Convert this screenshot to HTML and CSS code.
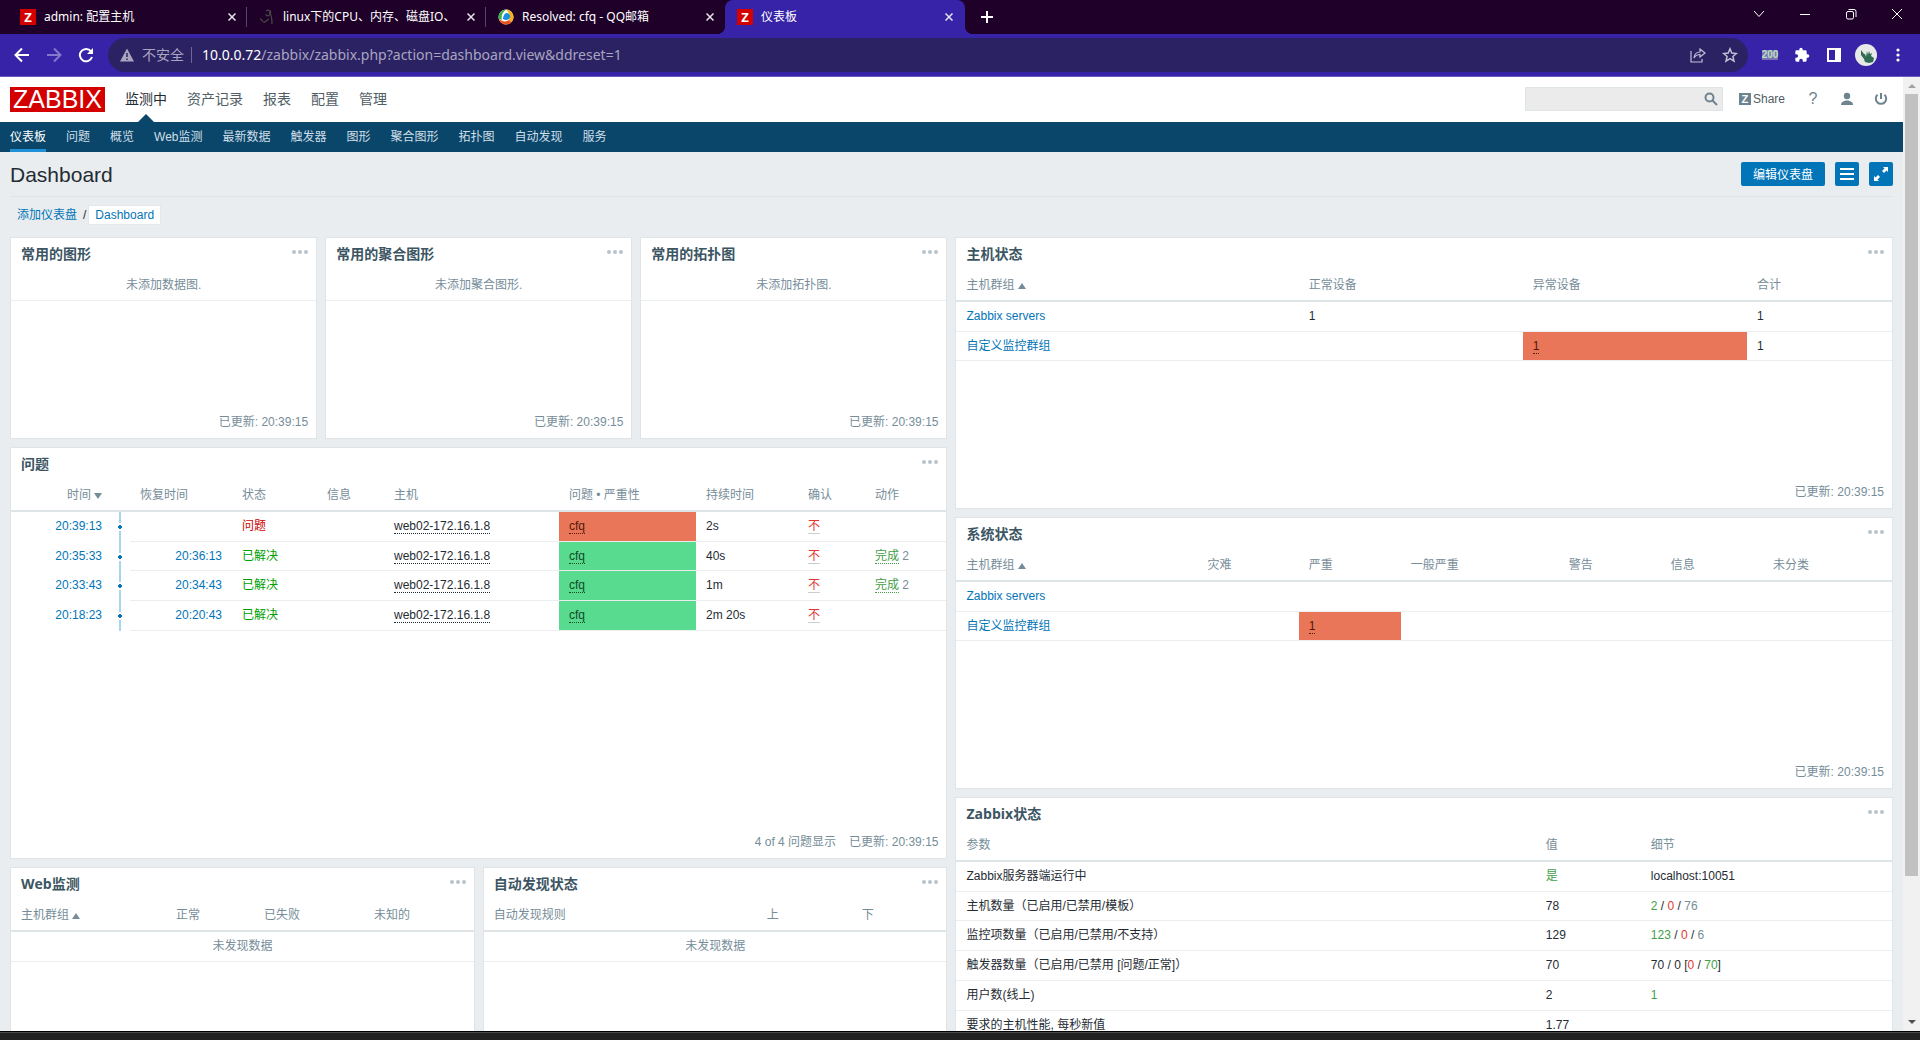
FILE: index.html
```html
<!DOCTYPE html>
<html lang="zh-CN">
<head>
<meta charset="utf-8">
<title>仪表板</title>
<link rel="stylesheet" href="styles.css">
</head>
<body>
<header class="browser">
  <div class="tabstrip">
    <div class="tab">
      <span class="favicon-z">Z</span><span class="tab-title">admin: 配置主机</span>
      <button class="tab-close" aria-label="关闭"><svg width="8" height="8" viewBox="0 0 8 8"><path d="M0.5 0.5l7 7M7.5 0.5l-7 7"/></svg></button>
    </div>
    <div class="tab">
      <svg class="favicon" width="16" height="16" viewBox="0 0 16 16" fill="none" stroke="#4a4347" stroke-width="1.3"><path d="M1 10c2 0 2 3 4 3s3-2 5-3M7 2c3-2 6 0 4 3S7 7 7 5M10 3c3 3 3 7 3 12"/></svg>
      <span class="tab-title">linux下的CPU、内存、磁盘IO、</span>
      <button class="tab-close" aria-label="关闭"><svg width="8" height="8" viewBox="0 0 8 8"><path d="M0.5 0.5l7 7M7.5 0.5l-7 7"/></svg></button>
    </div>
    <div class="tab last">
      <svg class="favicon" width="16" height="16" viewBox="0 0 16 16"><circle cx="8" cy="8" r="7.5" fill="#fff"/><path d="M8 .5A7.5 7.5 0 0 0 .8 10l3 1C3 6 5 3 8 .5z" fill="#3fae49"/><path d="M8 .5c4 0 7.500 3.500 7.500 7.500 0 2-1 4-2 5l-2.500-2C12 7 11 3 8 .5z" fill="#f6b21b"/><path d="M.8 10c1 3.500 4 5.500 7.200 5.500 2.500 0 4.500-1 5.500-2.500l-2.500-2c-3 2-6 2-10.200-1z" fill="#e8541f"/><path d="M8 4a3.500 3.500 0 0 1 3 6c-2 1.500-4.500 1.200-6 0 0-2.500 1-5 3-6z" fill="#1e8fe0"/></svg>
      <span class="tab-title">Resolved: cfq - QQ邮箱</span>
      <button class="tab-close" aria-label="关闭"><svg width="8" height="8" viewBox="0 0 8 8"><path d="M0.5 0.5l7 7M7.5 0.5l-7 7"/></svg></button>
    </div>
    <div class="tab active">
      <span class="favicon-z">Z</span><span class="tab-title">仪表板</span>
      <button class="tab-close" aria-label="关闭"><svg width="8" height="8" viewBox="0 0 8 8"><path d="M0.5 0.5l7 7M7.5 0.5l-7 7"/></svg></button>
    </div>
    <button class="new-tab" aria-label="新标签页"><svg width="12" height="12" viewBox="0 0 12 12" stroke="#fff" stroke-width="2"><path d="M6 0v12M0 6h12"/></svg></button>
    <div class="window-controls">
      <button aria-label="搜索标签页"><svg width="12" height="12" viewBox="0 0 12 12"><path d="M1 3l5 5.500L11 3"/></svg></button>
      <button aria-label="最小化"><svg width="12" height="12" viewBox="0 0 12 12"><path d="M1 6.500h10"/></svg></button>
      <button aria-label="还原"><svg width="12" height="12" viewBox="0 0 12 12"><rect x="1.500" y="3.500" width="7" height="7.500" rx="1.500"/><path d="M3.500 1.500H9a2 2 0 0 1 2 2V9"/></svg></button>
      <button aria-label="关闭窗口"><svg width="12" height="12" viewBox="0 0 12 12"><path d="M1 1l10 10M11 1L1 11"/></svg></button>
    </div>
  </div>
  <div class="toolbar">
    <button class="tool" aria-label="后退"><svg width="16" height="16" viewBox="0 0 16 16" fill="none" stroke="#fff" stroke-width="2"><path d="M15 8H2M8 1.500L1.500 8 8 14.500"/></svg></button>
    <button class="tool" aria-label="前进"><svg width="16" height="16" viewBox="0 0 16 16" fill="none" stroke="#8478cc" stroke-width="2"><path d="M1 8h13M8 1.500L14.500 8 8 14.500"/></svg></button>
    <button class="tool" aria-label="刷新"><svg width="16" height="16" viewBox="0 0 16 16"><path d="M13 4.300A6.200 6.200 0 1 0 14 10" fill="none" stroke="#fff" stroke-width="2"/><path d="M15 1v6H9z" fill="#fff"/></svg></button>
    <div class="omnibox">
      <svg width="14" height="14" viewBox="0 0 14 14"><path d="M7 .5L14 13.500H0z" fill="#a9a5bf"/><path d="M7 5v4M7 10.500v1.500" stroke="#2b2264" stroke-width="1.500"/></svg>
      <span class="insecure">不安全</span>
      <span class="omni-sep"></span>
      <span class="url"><b>10.0.0.72</b>/zabbix/zabbix.php?action=dashboard.view&amp;ddreset=1</span>
      <button class="tool" aria-label="分享"><svg width="16" height="16" viewBox="0 0 16 16" fill="none" stroke="#c3bfd6" stroke-width="1.200"><path d="M1 4v11h11v-3M4 11c.5-4 3-6 6-6V2l5 4-5 4V7.500C7.500 7.500 5.500 8.500 4 11z"/></svg></button>
      <button class="tool" aria-label="收藏"><svg width="16" height="16" viewBox="0 0 16 16" fill="none" stroke="#c3bfd6" stroke-width="1.500"><path d="M8 1.800l1.800 4.300 4.600.4-3.500 3 1.100 4.600L8 11.700l-4 2.400 1.100-4.600-3.500-3 4.600-.4z"/></svg></button>
    </div>
    <button class="tool" aria-label="扩展"><span class="ext">200</span></button>
    <button class="tool" aria-label="扩展程序"><svg width="16" height="16" viewBox="0 0 24 24" fill="#fff"><path d="M20.500 11H19V7a2 2 0 0 0-2-2h-4V3.500a2.500 2.500 0 0 0-5 0V5H4a2 2 0 0 0-2 2v3.800h1.500a2.700 2.700 0 0 1 0 5.400H2V20a2 2 0 0 0 2 2h3.800v-1.500a2.700 2.700 0 0 1 5.400 0V22H17a2 2 0 0 0 2-2v-4h1.500a2.500 2.500 0 0 0 0-5z"/></svg></button>
    <button class="tool" aria-label="侧边栏"><svg width="14" height="14" viewBox="0 0 14 14"><path d="M0 0h14v14H0z M2 2v10h6V2z" fill="#fff" fill-rule="evenodd"/></svg></button>
    <button class="tool" aria-label="用户"><svg width="22" height="22" viewBox="0 0 22 22"><circle cx="11" cy="11" r="11" fill="#e6e9e8"/><path d="M6 6l3 4h1l1 3 1-6 1 4 1-4 1 3 2-1-1 3 3 2-1 4-4 1-4-1-1-3-3-4z" fill="#2f6b52"/></svg></button>
    <button class="tool" aria-label="菜单"><svg width="4" height="14" viewBox="0 0 4 14" fill="#fff"><circle cx="2" cy="2" r="1.600"/><circle cx="2" cy="7" r="1.600"/><circle cx="2" cy="12" r="1.600"/></svg></button>
  </div>
</header>

<div class="viewport">
  <div class="page">
    <div class="top">
      <a class="logo" href="#">ZABBIX</a>
      <nav class="menu">
        <a class="selected" href="#">监测中</a><a href="#">资产记录</a><a href="#">报表</a><a href="#">配置</a><a href="#">管理</a>
      </nav>
      <form class="search">
        <input type="text" aria-label="搜索">
        <button type="button" aria-label="搜索"><svg width="14" height="14" viewBox="0 0 14 14" fill="none" stroke="#6d838f" stroke-width="2"><circle cx="5.500" cy="5.500" r="4"/><path d="M8.500 8.500L13 13"/></svg></button>
      </form>
      <a class="share" href="#"><span class="share-z">Z</span>Share</a>
      <a class="help" href="#">?</a>
      <a class="icon-link" href="#" aria-label="用户"><svg width="14" height="14" viewBox="0 0 14 14" fill="#6d838f"><circle cx="7" cy="4" r="3.200"/><path d="M1 13c0-6 12-6 12 0z"/></svg></a>
      <a class="icon-link" href="#" aria-label="退出"><svg width="14" height="14" viewBox="0 0 14 14" fill="none" stroke="#6d838f" stroke-width="2"><path d="M7 1v6M3.500 2.800a5.200 5.200 0 1 0 7 0"/></svg></a>
    </div>
    <nav class="submenu">
      <a class="selected" href="#">仪表板</a><a href="#">问题</a><a href="#">概览</a><a href="#">Web监测</a><a href="#">最新数据</a><a href="#">触发器</a><a href="#">图形</a><a href="#">聚合图形</a><a href="#">拓扑图</a><a href="#">自动发现</a><a href="#">服务</a>
    </nav>
    <div class="title-bar">
      <h1>Dashboard</h1>
      <button class="btn">编辑仪表盘</button>
      <button class="btn square" aria-label="菜单"><svg width="14" height="12" viewBox="0 0 14 12" fill="#fff"><path d="M0 0h14v2H0zM0 5h14v2H0zM0 10h14v2H0z"/></svg></button>
      <button class="btn square" aria-label="全屏"><svg width="14" height="14" viewBox="0 0 14 14" fill="#fff"><path d="M9 0h5v5l-1.500-1.500L10 6 8 4l2.500-2.500zM5 14H0V9l1.500 1.500L4 8l2 2-2.500 2.500z"/></svg></button>
    </div>
    <div class="crumbs"><a href="#">添加仪表盘</a><span class="slash">/</span><a class="current" href="#">Dashboard</a></div>

    <main class="grid">
      <section class="widget g-graph">
        <header><h4>常用的图形</h4><button class="dots" aria-label="更多"><i></i><i></i><i></i></button></header>
        <p class="nodata">未添加数据图.</p>
        <footer>已更新: 20:39:15</footer>
      </section>
      <section class="widget g-screen">
        <header><h4>常用的聚合图形</h4><button class="dots" aria-label="更多"><i></i><i></i><i></i></button></header>
        <p class="nodata">未添加聚合图形.</p>
        <footer>已更新: 20:39:15</footer>
      </section>
      <section class="widget g-map">
        <header><h4>常用的拓扑图</h4><button class="dots" aria-label="更多"><i></i><i></i><i></i></button></header>
        <p class="nodata">未添加拓扑图.</p>
        <footer>已更新: 20:39:15</footer>
      </section>

      <section class="widget g-host">
        <header><h4>主机状态</h4><button class="dots" aria-label="更多"><i></i><i></i><i></i></button></header>
        <table>
          <colgroup><col class="c342"><col class="c224"><col class="c224"><col class="c145"></colgroup>
          <thead><tr><th>主机群组<i class="up"></i></th><th>正常设备</th><th>异常设备</th><th>合计</th></tr></thead>
          <tbody>
            <tr><td><a href="#">Zabbix servers</a></td><td>1</td><td></td><td>1</td></tr>
            <tr><td><a href="#">自定义监控群组</a></td><td></td><td class="high"><span class="hint">1</span></td><td>1</td></tr>
          </tbody>
        </table>
        <footer>已更新: 20:39:15</footer>
      </section>

      <section class="widget g-problems">
        <header><h4>问题</h4><button class="dots" aria-label="更多"><i></i><i></i><i></i></button></header>
        <table class="problems">
          <colgroup><col class="c101"><col class="c18"><col class="c102"><col class="c85"><col class="c67"><col class="c175"><col class="c137"><col class="c102"><col class="c67"><col class="c82"></colgroup>
          <thead><tr><th class="right">时间<i class="down"></i></th><th></th><th>恢复时间</th><th>状态</th><th>信息</th><th>主机</th><th>问题 • 严重性</th><th>持续时间</th><th>确认</th><th>动作</th></tr></thead>
          <tbody>
            <tr><td class="time"><a href="#">20:39:13</a></td><td class="line"></td><td class="right"></td><td class="bad">问题</td><td></td><td><span class="hint">web02-172.16.1.8</span></td><td class="high"><span class="hint">cfq</span></td><td>2s</td><td><a class="ack" href="#">不</a></td><td></td></tr>
            <tr><td class="time"><a href="#">20:35:33</a></td><td class="line"></td><td class="right"><a href="#">20:36:13</a></td><td class="good">已解决</td><td></td><td><span class="hint">web02-172.16.1.8</span></td><td class="ok"><span class="hint">cfq</span></td><td>40s</td><td><a class="ack" href="#">不</a></td><td><span class="hint green">完成</span> <span class="grey">2</span></td></tr>
            <tr><td class="time"><a href="#">20:33:43</a></td><td class="line"></td><td class="right"><a href="#">20:34:43</a></td><td class="good">已解决</td><td></td><td><span class="hint">web02-172.16.1.8</span></td><td class="ok"><span class="hint">cfq</span></td><td>1m</td><td><a class="ack" href="#">不</a></td><td><span class="hint green">完成</span> <span class="grey">2</span></td></tr>
            <tr><td class="time"><a href="#">20:18:23</a></td><td class="line"></td><td class="right"><a href="#">20:20:43</a></td><td class="good">已解决</td><td></td><td><span class="hint">web02-172.16.1.8</span></td><td class="ok"><span class="hint">cfq</span></td><td>2m 20s</td><td><a class="ack" href="#">不</a></td><td></td></tr>
          </tbody>
        </table>
        <footer><span>4 of 4 问题显示</span><span>已更新: 20:39:15</span></footer>
      </section>

      <section class="widget g-system">
        <header><h4>系统状态</h4><button class="dots" aria-label="更多"><i></i><i></i><i></i></button></header>
        <table>
          <colgroup><col class="c241"><col class="c101"><col class="c102"><col class="c158"><col class="c102"><col class="c102"><col class="c129"></colgroup>
          <thead><tr><th>主机群组<i class="up"></i></th><th>灾难</th><th>严重</th><th>一般严重</th><th>警告</th><th>信息</th><th>未分类</th></tr></thead>
          <tbody>
            <tr><td><a href="#">Zabbix servers</a></td><td></td><td></td><td></td><td></td><td></td><td></td></tr>
            <tr><td><a href="#">自定义监控群组</a></td><td></td><td class="high"><span class="hint">1</span></td><td></td><td></td><td></td><td></td></tr>
          </tbody>
        </table>
        <footer>已更新: 20:39:15</footer>
      </section>

      <section class="widget g-status">
        <header><h4>Zabbix状态</h4><button class="dots" aria-label="更多"><i></i><i></i><i></i></button></header>
        <table>
          <colgroup><col class="c579"><col class="c105"><col class="c251"></colgroup>
          <thead><tr><th>参数</th><th>值</th><th>细节</th></tr></thead>
          <tbody>
            <tr><td>Zabbix服务器端运行中</td><td class="green">是</td><td>localhost:10051</td></tr>
            <tr><td>主机数量（已启用/已禁用/模板）</td><td>78</td><td><span class="green">2</span> / <span class="red">0</span> / <span class="grey">76</span></td></tr>
            <tr><td>监控项数量（已启用/已禁用/不支持）</td><td>129</td><td><span class="green">123</span> / <span class="red">0</span> / <span class="grey">6</span></td></tr>
            <tr><td>触发器数量（已启用/已禁用 [问题/正常]）</td><td>70</td><td>70 / 0 [<span class="red">0</span> / <span class="green">70</span>]</td></tr>
            <tr><td>用户数(线上)</td><td>2</td><td class="green">1</td></tr>
            <tr><td>要求的主机性能, 每秒新值</td><td>1.77</td><td></td></tr>
          </tbody>
        </table>
      </section>

      <section class="widget g-web">
        <header><h4>Web监测</h4><button class="dots" aria-label="更多"><i></i><i></i><i></i></button></header>
        <table>
          <colgroup><col class="c155"><col class="c88"><col class="c110"><col class="c110"></colgroup>
          <thead><tr><th>主机群组<i class="up"></i></th><th>正常</th><th>已失败</th><th>未知的</th></tr></thead>
          <tbody><tr><td class="empty" colspan="4">未发现数据</td></tr></tbody>
        </table>
      </section>
      <section class="widget g-discovery">
        <header><h4>自动发现状态</h4><button class="dots" aria-label="更多"><i></i><i></i><i></i></button></header>
        <table>
          <colgroup><col class="c273"><col class="c95"><col class="c95"></colgroup>
          <thead><tr><th>自动发现规则</th><th>上</th><th>下</th></tr></thead>
          <tbody><tr><td class="empty" colspan="3">未发现数据</td></tr></tbody>
        </table>
      </section>
    </main>
  </div>
  <div class="scrollbar"><i class="arrow-up"></i><div class="thumb"></div><i class="arrow-down"></i></div>
</div>
<div class="taskbar"></div>
</body>
</html>
```

FILE: styles.css
```css
* { box-sizing: border-box; }

body {
  margin: 0;
  height: 100vh;
  display: flex;
  flex-direction: column;
  overflow: hidden;
  font: 12px/16px "Liberation Sans", "Noto Sans CJK SC", sans-serif;
  color: #1f2c33;
  background: #e9edf0;
}

button { margin: 0; padding: 0; border: 0; background: none; font: inherit; color: inherit; }
a { color: #0275b8; text-decoration: none; }
svg { display: block; }
h1, h4, p { margin: 0; }

/* Browser window frame */
.browser { flex: none; font-family: "Noto Sans", "Noto Sans CJK SC", sans-serif; color: #fff; }
.tabstrip { display: flex; height: 34px; padding-left: 8px; background: #1e0029; }
.tab { display: flex; align-items: center; width: 239px; padding: 0 11px 0 12px; position: relative; }
.tab:not(.last):not(.active)::after { content: ""; position: absolute; right: 0; top: 7px; width: 1px; height: 20px; background: #5a4563; }
.tab.active { width: 240px; padding-right: 12px; background: #3623a8; border-radius: 8px 8px 0 0; }
.tab.active::before, .tab.active::after { content: ""; position: absolute; bottom: 0; width: 8px; height: 8px; }
.tab.active::before { left: -8px; background: radial-gradient(circle at 0 0, transparent 8px, #3623a8 8px); }
.tab.active::after { right: -8px; background: radial-gradient(circle at 100% 0, transparent 8px, #3623a8 8px); }
.favicon, .favicon-z { flex: none; width: 16px; height: 16px; margin-right: 8px; }
.favicon-z { background: #d40000; font-weight: bold; font-size: 13px; text-align: center; }
.tab-title { flex: 1; overflow: hidden; white-space: nowrap; margin-right: 8px; }
.tab-close svg { stroke: #e9e5ec; stroke-width: 1.5px; }
.new-tab { width: 28px; margin-left: 8px; display: flex; align-items: center; justify-content: center; }
.window-controls { display: flex; margin-left: auto; }
.window-controls button { width: 46px; height: 28px; display: flex; align-items: center; justify-content: center; }
.window-controls svg { fill: none; stroke: #fff; stroke-width: 1px; }

.toolbar { display: flex; align-items: center; height: 43px; padding: 0 6px; background: #3623a8; border-bottom: 1px solid #6d58bd; }
.tool { width: 32px; height: 32px; flex: none; display: flex; align-items: center; justify-content: center; }
.omnibox { flex: 1; display: flex; align-items: center; height: 34px; margin: 0 6px; padding: 0 2px 0 12px; border-radius: 17px; background: #2b2264; font-size: 14px; color: #a9a5bf; }
.insecure { margin-left: 8px; }
.omni-sep { width: 1px; height: 16px; margin: 0 10px 0 7px; background: #6f6895; }
.url { flex: 1; white-space: nowrap; }
.url b { font-weight: normal; color: #fff; }
.ext { background: #7b72b5; color: #b9e0bd; font: bold 10px/10px "Liberation Sans", sans-serif; }

/* Page shell */
.viewport { flex: 1; min-height: 0; display: flex; }
.page { flex: 1; min-width: 0; overflow: hidden; }
.scrollbar { flex: none; width: 17px; display: flex; flex-direction: column; align-items: center; background: #f1f1f1; }
.thumb { width: 13px; flex: 0 0 82%; margin: 6px 0 auto; background: #c1c1c1; }
.arrow-up, .arrow-down { border: 4px solid transparent; flex: none; }
.arrow-up { border-top: 0; border-bottom-color: #a3a3a3; margin-top: 7px; }
.arrow-down { border-bottom: 0; border-top-color: #505050; margin-bottom: 7px; }
.taskbar { flex: none; height: 9px; background: #222; border-top: 1px solid #000; box-shadow: inset 0 1px #4a4a4a; }

/* Main menu */
.top { display: flex; align-items: center; height: 45px; padding: 0 10px; background: #fff; }
.logo { width: 95px; height: 25px; background: #d40000; color: #fff; font-size: 25px; line-height: 25px; text-align: center; }
.menu { flex: 1; align-self: stretch; display: flex; gap: 20px; margin-left: 20px; font-size: 14px; line-height: 44px; }
.menu a { color: #4f5d65; }
.menu .selected { position: relative; color: #1f2c33; }
.menu .selected::after { content: ""; position: absolute; left: 50%; bottom: 0; margin-left: -8px; border: 8px solid transparent; border-top: 0; border-bottom-color: #0a466a; }
.search { display: flex; width: 198px; height: 24px; border: 1px solid #dfe4e7; background: #ebebeb; }
.search input { flex: 1; min-width: 0; border: 0; padding: 0 5px; background: none; }
.search button { padding: 0 4px; }
.share { display: flex; align-items: center; margin: 0 14px 0 16px; gap: 2px; color: #4f5d65; }
.share-z { width: 12px; height: 12px; background: #6d838f; color: #fff; font: bold 11px/12px "Liberation Sans", sans-serif; text-align: center; }
.help { width: 24px; margin-left: 2px; text-align: center; font-size: 16px; color: #6d838f; }
.icon-link { width: 24px; margin-left: 10px; display: flex; justify-content: center; }
.search, .share, .help, .icon-link { margin-bottom: 2px; }

.submenu { display: flex; gap: 20px; height: 30px; padding: 0 10px; background: #0a466a; line-height: 30px; }
.submenu a { height: 30px; color: #d0dfe8; white-space: nowrap; }
.submenu .selected { color: #fff; box-shadow: inset 0 -3px #1f8fd6; }

/* Title and breadcrumbs */
.title-bar { display: flex; align-items: center; gap: 10px; height: 45px; margin: 0 10px; border-bottom: 1px solid #dfe4e7; }
h1 { flex: 1; font-size: 21px; line-height: 24px; font-weight: normal; padding-top: 1px; }
.btn { height: 24px; padding: 1px 12px 0; border-radius: 2px; background: #0275b8; color: #fff; }
.btn.square { width: 24px; padding: 0; display: flex; align-items: center; justify-content: center; }
.crumbs { display: flex; align-items: center; height: 36px; padding: 0 17px; }
.slash { margin: 0 2px 0 6px; }
.crumbs .current { display: flex; align-items: center; height: 20px; padding: 0 6px; background: #fff; border: 1px solid #e3e8eb; line-height: 14px; }

/* Dashboard grid */
.grid { display: grid; grid-template-columns: repeat(12, minmax(0, 1fr)); grid-auto-rows: 62px; gap: 8px; padding: 4px 10px 10px; }
.g-graph { grid-area: 1 / 1 / 4 / 3; }
.g-screen { grid-area: 1 / 3 / 4 / 5; }
.g-map { grid-area: 1 / 5 / 4 / 7; }
.g-host { grid-area: 1 / 7 / 5 / 13; }
.g-problems { grid-area: 4 / 1 / 10 / 7; }
.g-system { grid-area: 5 / 7 / 9 / 13; }
.g-status { grid-area: 9 / 7 / 14 / 13; }
.g-web { grid-area: 10 / 1 / 13 / 4; }
.g-discovery { grid-area: 10 / 4 / 13 / 7; }

.widget { display: flex; flex-direction: column; min-width: 0; overflow: hidden; background: #fff; border: 1px solid #dfe4e7; }
.widget header { display: flex; flex: none; height: 33px; padding: 0 8px 0 10px; justify-content: space-between; }
h4 { font: bold 14px/32px "Open Sans", "Noto Sans CJK SC", sans-serif; color: #3c5563; }
.dots { display: flex; align-items: center; gap: 2px; height: 28px; }
.dots i { width: 4px; height: 4px; border-radius: 50%; background: #b8c3ca; }
.widget footer { display: flex; flex: none; gap: 13px; justify-content: flex-end; margin-top: auto; padding: 0 8px; line-height: 32px; color: #768d99; }
.nodata { height: 30px; line-height: 28px; text-align: center; color: #768d99; border-bottom: 1px solid #ebeef0; }

table { width: 100%; table-layout: fixed; border-collapse: separate; border-spacing: 0; }
th, td { padding: 0 10px; text-align: left; white-space: nowrap; vertical-align: top; }
th { height: 31px; line-height: 28px; font-weight: normal; color: #768d99; border-bottom: 2px solid #dfe4e7; }
td { height: 30px; line-height: 28px; border-bottom: 1px solid #ebeef0; }
tr:nth-child(2) td { height: 29px; }
.right, .time { text-align: right; }
.empty { text-align: center; color: #768d99; }
.time, .line { border-bottom: 0; }
.problems th:nth-child(2) { padding: 0; }
.line {
  padding: 0;
  background:
    radial-gradient(circle, #0275b8 2px, transparent 2px) 6px 13px / 4px 4px no-repeat,
    linear-gradient(#fff, #fff) 7px 11px / 2px 8px no-repeat,
    linear-gradient(#a8d5ee, #a8d5ee) 7px 0 / 2px 100% no-repeat;
}
.up, .down { display: inline-block; margin-left: 3px; border: 4px solid transparent; }
.up { border-top: 0; border-bottom: 6px solid #768d99; }
.down { border-bottom: 0; border-top: 6px solid #768d99; }
.hint { border-bottom: 1px dotted currentColor; }
.ack { color: #e33734; border-bottom: 1px solid #c8d0d5; }
.high { background: #e97659; color: #52190b; }
.ok { background: #59db8f; color: #0d4a26; }
.bad { color: #d00000; }
.good { color: #00a000; }
.green { color: #429e47; }
.red { color: #e33734; }
.grey { color: #768d99; }

.c18 { width: 18px; } .c67 { width: 67px; } .c82 { width: 82px; } .c85 { width: 85px; }
.c88 { width: 88px; } .c95 { width: 95px; } .c101 { width: 101px; } .c102 { width: 102px; }
.c105 { width: 105px; } .c110 { width: 110px; } .c129 { width: 129px; } .c137 { width: 137px; }
.c145 { width: 145px; } .c155 { width: 155px; } .c158 { width: 158px; } .c175 { width: 175px; }
.c224 { width: 224px; } .c241 { width: 241px; } .c251 { width: 251px; } .c273 { width: 273px; }
.c342 { width: 342px; } .c579 { width: 579px; }
```
